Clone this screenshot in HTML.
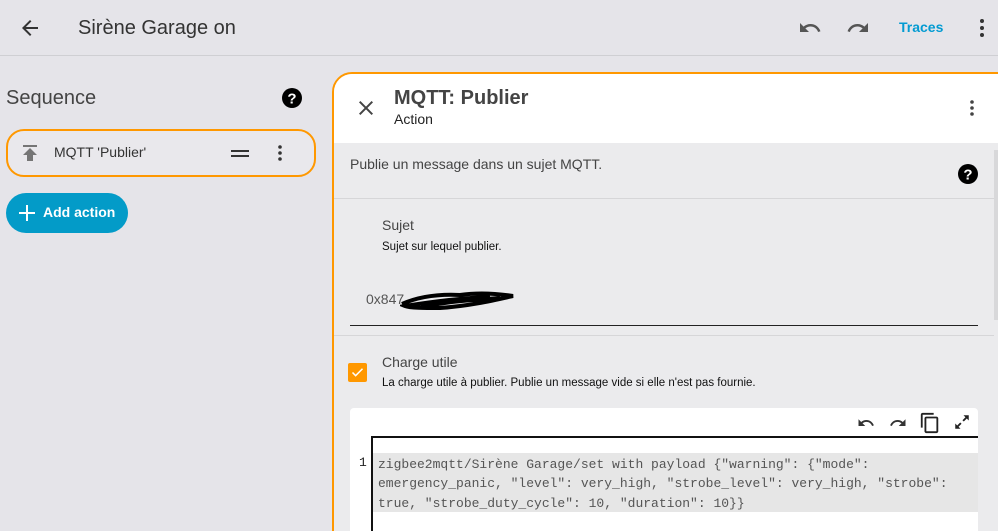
<!DOCTYPE html>
<html style="width:998px;height:531px;overflow:hidden"><head><meta charset="utf-8"><style>
*{margin:0;padding:0;box-sizing:border-box}
body{width:998px;height:531px;overflow:hidden;background:#e5e4e9;font-family:"Liberation Sans",sans-serif;position:relative;color:#212121}
.a{position:absolute}
svg{display:block}
</style></head><body>
<!-- top bar -->
<svg class="a" style="left:18px;top:16px" width="24" height="24" viewBox="0 0 24 24"><path d="M20 11H7.83l5.59-5.59L12 4l-8 8 8 8 1.41-1.41L7.83 13H20v-2z" fill="#333"/></svg>
<div class="a" style="left:78px;top:17px;font-size:20px;color:#333">Sirène Garage on</div>
<svg class="a" style="left:798px;top:16px" width="24" height="24" viewBox="0 0 24 24"><path d="M12.5 8c-2.65 0-5.05.99-6.9 2.6L2 7v9h9l-3.62-3.62c1.39-1.16 3.16-1.88 5.12-1.88 3.54 0 6.55 2.31 7.6 5.5l2.37-.78C21.08 11.03 17.15 8 12.5 8z" fill="#555"/></svg>
<svg class="a" style="left:846px;top:16px" width="24" height="24" viewBox="0 0 24 24"><path d="M18.4 10.6C16.55 8.99 14.15 8 11.5 8c-4.65 0-8.58 3.03-9.96 7.22L3.9 16c1.05-3.19 4.05-5.5 7.6-5.5 1.95 0 3.73.72 5.12 1.88L13 16h9V7l-3.6 3.6z" fill="#555"/></svg>
<div class="a" style="left:899px;top:19px;font-size:14px;font-weight:bold;color:#039bd2">Traces</div>
<svg class="a" style="left:970px;top:16px" width="24" height="24" viewBox="0 0 24 24"><circle cx="12" cy="5" r="2" fill="#333"/><circle cx="12" cy="12" r="2" fill="#333"/><circle cx="12" cy="19" r="2" fill="#333"/></svg>
<div class="a" style="left:0;top:55px;width:998px;height:1px;background:#cfcfd3"></div>

<!-- left -->
<div class="a" style="left:6px;top:87px;font-size:20px;color:#444">Sequence</div>
<svg class="a" style="left:280px;top:86px" width="24" height="24" viewBox="0 0 24 24"><circle cx="12" cy="12" r="10" fill="#000"/><text x="12" y="17.5" font-size="15" font-weight="bold" fill="#fff" text-anchor="middle" font-family="Liberation Sans">?</text></svg>
<div class="a" style="left:6px;top:129px;width:310px;height:48px;border:2px solid #ff9800;border-radius:18px;background:#e9e8ec"></div>
<svg class="a" style="left:18px;top:141px" width="24" height="24" viewBox="0 0 24 24"><path d="M5 4v2h14V4H5zm0 10h4v6h6v-6h4l-7-7-7 7z" fill="#757575"/></svg>
<div class="a" style="left:54px;top:144px;font-size:14px;color:#333">MQTT 'Publier'</div>
<div class="a" style="left:231px;top:150px;width:18px;height:2px;background:#333"></div>
<div class="a" style="left:231px;top:155px;width:18px;height:2px;background:#333"></div>
<svg class="a" style="left:268px;top:141px" width="24" height="24" viewBox="0 0 24 24"><circle cx="12" cy="6" r="1.8" fill="#333"/><circle cx="12" cy="12" r="1.8" fill="#333"/><circle cx="12" cy="18" r="1.8" fill="#333"/></svg>
<div class="a" style="left:6px;top:193px;width:122px;height:40px;border-radius:20px;background:#039bc8"></div>
<div class="a" style="left:19px;top:212px;width:16px;height:2px;background:#fff"></div>
<div class="a" style="left:26px;top:205px;width:2px;height:16px;background:#fff"></div>
<div class="a" style="left:43px;top:204px;font-size:14px;font-weight:bold;color:#fff">Add action</div>

<!-- card -->
<div class="a" style="left:332px;top:72px;width:700px;height:480px;border:2px solid #ff9800;border-radius:20px;background:#ebebed;overflow:hidden">
 <div class="a" style="left:0;top:0;width:700px;height:69px;background:#fff"></div>
</div>
<svg class="a" style="left:354px;top:96px" width="24" height="24" viewBox="0 0 24 24"><path d="M19 6.41L17.59 5 12 10.59 6.41 5 5 6.41 10.59 12 5 17.59 6.41 19 12 13.41 17.59 19 19 17.59 13.41 12z" fill="#444"/></svg>
<div class="a" style="left:394px;top:87px;font-size:20px;font-weight:bold;color:#444">MQTT: Publier</div>
<div class="a" style="left:394px;top:111px;font-size:14px;color:#222">Action</div>
<svg class="a" style="left:960px;top:96px" width="24" height="24" viewBox="0 0 24 24"><circle cx="12" cy="6" r="1.8" fill="#444"/><circle cx="12" cy="12" r="1.8" fill="#444"/><circle cx="12" cy="18" r="1.8" fill="#444"/></svg>
<div class="a" style="left:994px;top:150px;width:4px;height:170px;background:#d8d8da"></div>
<div class="a" style="left:350px;top:156px;font-size:14px;color:#444">Publie un message dans un sujet MQTT.</div>
<svg class="a" style="left:956px;top:162px" width="24" height="24" viewBox="0 0 24 24"><circle cx="12" cy="12" r="10" fill="#000"/><text x="12" y="17.5" font-size="15" font-weight="bold" fill="#fff" text-anchor="middle" font-family="Liberation Sans">?</text></svg>
<div class="a" style="left:334px;top:198px;width:660px;height:1px;background:#d6d6d8"></div>
<div class="a" style="left:382px;top:217px;font-size:14px;color:#444">Sujet</div>
<div class="a" style="left:382px;top:241px;font-size:11.5px;color:#111">Sujet sur lequel publier.</div>
<div class="a" style="left:366px;top:291px;font-size:14px;color:#555">0x847</div>
<svg class="a" style="left:400px;top:286px" width="115" height="26" viewBox="0 0 115 26"><path d="M2 18 C20 10 40 8 60 9 C80 6 100 8 113 10 C95 14 70 20 40 22 C25 22 10 22 5 20 C30 16 60 12 90 11 M20 22 C40 16 70 14 100 12" stroke="#000" stroke-width="4" fill="none"/></svg>
<div class="a" style="left:350px;top:325px;width:628px;height:1px;background:#222"></div>
<div class="a" style="left:334px;top:335px;width:660px;height:1px;background:#d6d6d8"></div>
<div class="a" style="left:348px;top:363px;width:19px;height:19px;border-radius:2px;background:#ff9800"></div>
<svg class="a" style="left:350px;top:365px" width="15" height="15" viewBox="0 0 24 24"><path d="M4 12l5 5L20 6" stroke="#fff" stroke-width="2.5" fill="none"/></svg>
<div class="a" style="left:382px;top:354px;font-size:14px;color:#444">Charge utile</div>
<div class="a" style="left:382px;top:377px;font-size:11.5px;color:#111">La charge utile à publier. Publie un message vide si elle n'est pas fournie.</div>
<div class="a" style="left:350px;top:408px;width:628px;height:123px;background:#fff;border-radius:4px 4px 0 0"></div>
<svg class="a" style="left:857px;top:414px" width="18" height="18" viewBox="0 0 24 24"><path d="M12.5 8c-2.65 0-5.05.99-6.9 2.6L2 7v9h9l-3.62-3.62c1.39-1.16 3.16-1.88 5.12-1.88 3.54 0 6.55 2.31 7.6 5.5l2.37-.78C21.08 11.03 17.150 8 12.5 8z" fill="#333"/></svg>
<svg class="a" style="left:889px;top:414px" width="18" height="18" viewBox="0 0 24 24"><path d="M18.4 10.6C16.55 8.99 14.15 8 11.5 8c-4.65 0-8.58 3.03-9.96 7.22L3.9 16c1.05-3.19 4.05-5.5 7.6-5.5 1.95 0 3.73.72 5.12 1.88L13 16h9V7l-3.6 3.6z" fill="#333"/></svg>
<svg class="a" style="left:919px;top:412px" width="22" height="22" viewBox="0 0 24 24"><path d="M16 1H4c-1.1 0-2 .9-2 2v14h2V3h12V1zm3 4H8c-1.1 0-2 .9-2 2v14c0 1.1.9 2 2 2h11c1.1 0 2-.9 2-2V7c0-1.1-.9-2-2-2zm0 16H8V7h11v14z" fill="#222"/></svg>
<svg class="a" style="left:953px;top:413px" width="18" height="18" viewBox="0 0 24 24"><path d="M14 3h7v7l-2.6-2.6-4 4-1.8-1.8 4-4zM10 21H3v-7l2.6 2.6 4-4 1.8 1.8-4 4z" fill="#222"/></svg>
<div class="a" style="left:371px;top:436px;width:607px;height:2px;background:#111"></div>
<div class="a" style="left:371px;top:436px;width:2px;height:95px;background:#111"></div>
<div class="a" style="left:373px;top:453px;width:605px;height:59px;background:#e6e6e6"></div>
<div class="a" style="left:359px;top:455px;font-family:'Liberation Mono',monospace;font-size:13px;color:#222">1</div>
<div class="a" style="left:378px;top:455px;width:598px;font-family:'Liberation Mono',monospace;font-size:13px;line-height:19.3px;color:#555;white-space:nowrap">zigbee2mqtt/Sirène Garage/set with payload {"warning": {"mode":<br>emergency_panic, "level": very_high, "strobe_level": very_high, "strobe":<br>true, "strobe_duty_cycle": 10, "duration": 10}}</div>
</body></html>
